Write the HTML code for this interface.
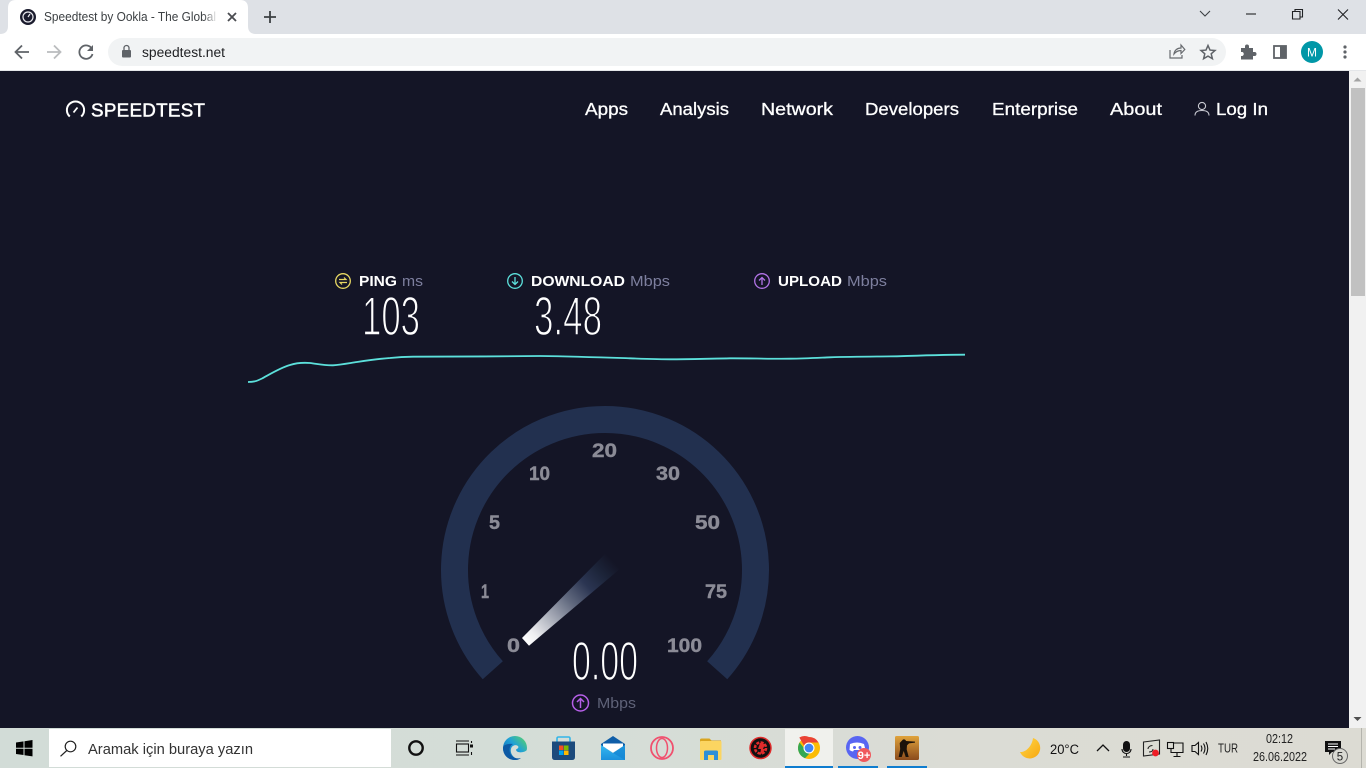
<!DOCTYPE html>
<html><head><meta charset="utf-8"><title>Speedtest by Ookla</title>
<style>html,body{margin:0;padding:0;width:1366px;height:768px;overflow:hidden;background:#141526}svg{display:block}text{font-family:"Liberation Sans",sans-serif}</style></head>
<body>
<svg xmlns="http://www.w3.org/2000/svg" width="1366" height="768" viewBox="0 0 1366 768">
<defs>
<linearGradient id="tb" x1="0" x2="1" y1="0" y2="0"><stop offset="0" stop-color="#d2dcd7"/><stop offset=".45" stop-color="#d5ddd7"/><stop offset=".7" stop-color="#dbdcd5"/><stop offset="1" stop-color="#dcdbd3"/></linearGradient>
<linearGradient id="fade" x1="0" x2="1" y1="0" y2="0"><stop offset="0" stop-color="#fff" stop-opacity="0"/><stop offset="1" stop-color="#fff"/></linearGradient>
<linearGradient id="needle" gradientUnits="userSpaceOnUse" x1="525" y1="642" x2="613" y2="561"><stop offset="0" stop-color="#fff"/><stop offset=".1" stop-color="#eeeef1"/><stop offset=".5" stop-color="#636b80"/><stop offset=".7" stop-color="#2b3552"/><stop offset=".86" stop-color="#1c2439"/><stop offset="1" stop-color="#141526"/></linearGradient>
<linearGradient id="edge" x1="0" x2="1" y1="1" y2="0"><stop offset="0" stop-color="#0c59a4"/><stop offset=".55" stop-color="#1fa0d8"/><stop offset="1" stop-color="#5fd85f"/></linearGradient>
<linearGradient id="mail" x1="0" x2="0" y1="0" y2="1"><stop offset="0" stop-color="#35b8f0"/><stop offset="1" stop-color="#1b90dc"/></linearGradient>
<linearGradient id="cs" x1="0" x2="0" y1="0" y2="1"><stop offset="0" stop-color="#e0a33c"/><stop offset="1" stop-color="#8a4a1c"/></linearGradient>
<linearGradient id="moon" x1="0" x2="1" y1="0" y2="1"><stop offset="0" stop-color="#ffd84a"/><stop offset="1" stop-color="#f7a70f"/></linearGradient>
</defs>

<!-- browser chrome -->
<rect width="1366" height="34" fill="#dee1e6"/>
<rect y="34" width="1366" height="36" fill="#fff"/>
<rect y="70" width="1366" height="1" fill="#e4e6e9"/>
<path d="M0 34q8 0 8-8V8q0-8 8-8h224q8 0 8 8v18q0 8 8 8z" fill="#fff"/>
<circle cx="28" cy="17" r="8" fill="#1b1c2e"/><circle cx="28" cy="17" r="5" fill="none" stroke="#e9e9ee" stroke-width="1.2"/><path d="M28 17l2-3" stroke="#e9e9ee" stroke-width="1.2"/>
<text x="44" y="21" font-size="12.5" fill="#3c4043" textLength="172" lengthAdjust="spacingAndGlyphs">Speedtest by Ookla - The Global</text>
<rect x="203" y="6" width="15" height="22" fill="url(#fade)"/><rect x="218" y="6" width="26" height="22" fill="#fff"/>
<path d="M228 13l8 8M236 13l-8 8" stroke="#4a4c50" stroke-width="1.8"/>
<path d="M264 17h12M270 11v12" stroke="#3c4043" stroke-width="1.8"/>
<path d="M29 52H16M22 45.5L15.5 52l6.500 6.500" fill="none" stroke="#5f6368" stroke-width="1.8"/>
<path d="M47 52h13M54 45.500l6.500 6.500-6.500 6.500" fill="none" stroke="#babcbe" stroke-width="1.800"/>
<path d="M92 49a6.700 6.700 0 1 0 .5 5" fill="none" stroke="#5f6368" stroke-width="1.800"/><path d="M93 45v6h-6z" fill="#5f6368"/>
<rect x="108" y="38" width="1118" height="28" rx="14" fill="#f1f3f4"/>
<rect x="122" y="50" width="9" height="7.500" rx="1" fill="#5f6368"/><path d="M124 50v-2a2.500 2.500 0 0 1 5 0v2" fill="none" stroke="#5f6368" stroke-width="1.300"/>
<text x="142" y="57" font-size="13.500" fill="#202124" textLength="83" lengthAdjust="spacingAndGlyphs">speedtest.net</text>
<path d="M1170 50v8h12v-3" fill="none" stroke="#686b6f" stroke-width="1.200"/><path d="M1174 54c.5-4 3.500-6 7-6v-3l3.800 4.500-3.800 4v-3c-3 0-5 1-7 3.500z" fill="none" stroke="#686b6f" stroke-width="1.200"/>
<path d="M1208 45.500l2 4.600 5 .4-3.800 3.300 1.200 4.900-4.400-2.600-4.400 2.600 1.200-4.900-3.800-3.300 5-.4z" fill="none" stroke="#5f6368" stroke-width="1.500"/>
<path d="M1241 48h4v-1.500a2 2 0 0 1 4 0V48h4v4h1.500a2 2 0 0 1 0 4H1253v3.500h-12V56h1.500a2.200 2.200 0 0 0 0-4H1241z" fill="#5f6368"/>
<rect x="1274" y="46" width="12" height="12" fill="none" stroke="#5f6368" stroke-width="1.800"/><rect x="1280" y="46" width="6" height="12" fill="#5f6368"/>
<circle cx="1312" cy="52" r="11" fill="#0097a7"/><text x="1312" y="56.500" font-size="12" fill="#fff" text-anchor="middle">M</text>
<g fill="#5f6368"><circle cx="1345" cy="47" r="1.600"/><circle cx="1345" cy="52" r="1.600"/><circle cx="1345" cy="57" r="1.600"/></g>
<path d="M1200 11l5 5 5-5" fill="none" stroke="#3c4043" stroke-width="1.100"/>
<path d="M1246 14h10" stroke="#202124" stroke-width="1.100"/>
<path d="M1292.500 11.500h7.500v7.500h-7.500zM1295 11.500V9.500h7.500V17H1300" fill="none" stroke="#202124" stroke-width="1.100"/>
<path d="M1338 9.500l10 10M1348 9.500l-10 10" stroke="#202124" stroke-width="1.100"/>

<!-- page -->
<rect y="71" width="1349" height="657" fill="#141526"/>
<rect x="1349" y="71" width="17" height="657" fill="#f1f1f1"/>
<rect x="1351" y="88" width="14" height="208" fill="#c1c1c1"/>
<path d="M1357.500 77.500l4 4h-8z" fill="#a3a3a3"/><path d="M1353.500 717h8l-4 4z" fill="#505050"/>

<!-- logo -->
<path d="M69.800 116.500a8.600 8.600 0 1 1 11.400 0" fill="none" stroke="#fff" stroke-width="2"/><path d="M73.500 112.500l4-5" stroke="#fff" stroke-width="1.800"/>
<text x="91" y="116.500" font-size="18.800" fill="#fff" stroke="#fff" stroke-width=".5" textLength="114" lengthAdjust="spacing">SPEEDTEST</text>

<!-- nav -->
<g font-size="17.500" fill="#fff" stroke="#fff" stroke-width=".3">
<text x="585" y="115" textLength="43" lengthAdjust="spacingAndGlyphs">Apps</text>
<text x="660" y="115" textLength="69" lengthAdjust="spacingAndGlyphs">Analysis</text>
<text x="761" y="115" textLength="72" lengthAdjust="spacingAndGlyphs">Network</text>
<text x="865" y="115" textLength="94" lengthAdjust="spacingAndGlyphs">Developers</text>
<text x="992" y="115" textLength="86" lengthAdjust="spacingAndGlyphs">Enterprise</text>
<text x="1110" y="115" textLength="52" lengthAdjust="spacingAndGlyphs">About</text>
<text x="1216" y="115" textLength="52" lengthAdjust="spacingAndGlyphs">Log In</text>
</g>
<circle cx="1202" cy="106" r="3.600" fill="none" stroke="#c9cad2" stroke-width="1.100"/><path d="M1195 115.500c0-3.500 3-5 7-5s7 1.500 7 5" fill="none" stroke="#c9cad2" stroke-width="1.100"/>

<!-- result labels -->
<circle cx="343" cy="281" r="7.300" fill="none" stroke="#e8d863" stroke-width="1.300"/><path d="M339 279.500h7l-2-2M347 282.500h-7l2 2" fill="none" stroke="#e8d863" stroke-width="1.200"/>
<text x="359" y="286" font-size="14.500" font-weight="bold" fill="#fff" textLength="38" lengthAdjust="spacingAndGlyphs">PING</text>
<text x="402" y="286" font-size="14.500" fill="#7d7f9e" textLength="21" lengthAdjust="spacingAndGlyphs">ms</text>
<circle cx="515" cy="281" r="7.300" fill="none" stroke="#5ce0db" stroke-width="1.300"/><path d="M515 277v7M512 281.500l3 3 3-3" fill="none" stroke="#5ce0db" stroke-width="1.300"/>
<text x="531" y="286" font-size="14.500" font-weight="bold" fill="#fff" textLength="94" lengthAdjust="spacingAndGlyphs">DOWNLOAD</text>
<text x="630" y="286" font-size="14.500" fill="#7d7f9e" textLength="40" lengthAdjust="spacingAndGlyphs">Mbps</text>
<circle cx="762" cy="281" r="7.300" fill="none" stroke="#b273e6" stroke-width="1.300"/><path d="M762 285v-7M759 280.500l3-3 3 3" fill="none" stroke="#b273e6" stroke-width="1.300"/>
<text x="778" y="286" font-size="14.500" font-weight="bold" fill="#fff" textLength="64" lengthAdjust="spacingAndGlyphs">UPLOAD</text>
<text x="847" y="286" font-size="14.500" fill="#7d7f9e" textLength="40" lengthAdjust="spacingAndGlyphs">Mbps</text>

<!-- big numbers -->
<g fill="#fff" stroke="#141526" stroke-width="1.500" paint-order="fill" font-size="55">
<text x="362" y="335" textLength="58" lengthAdjust="spacingAndGlyphs">103</text>
<text x="534" y="335" textLength="68" lengthAdjust="spacingAndGlyphs">3.48</text>
<text x="572" y="680" textLength="66" lengthAdjust="spacingAndGlyphs">0.00</text>
</g>

<!-- graph -->
<path d="M248 382C254 382 257 381 262 378.500C272 373 281 367.500 290 365C297 362.700 303 362.500 310 363C318 364 325 365.500 333 365.300C342 364.500 350 363 357 362C370 360 380 358.700 390 358C400 357 406 356.800 413 356.700C450 356.500 500 356.500 540 356C575 356.500 605 357.500 630 358.300C650 359 660 359.300 673 359.300C695 359.200 712 358.600 730 358.300C750 358.200 770 359 790 358.700C805 358.500 818 357.800 830 357.300C855 356.500 875 356.600 897 356.300C920 355.500 945 354.800 965 354.700" fill="none" stroke="#5ce0db" stroke-width="1.800"/>

<!-- gauge -->
<path d="M492.800 670.300A150.500 150.500 0 1 1 717.200 670.300" fill="none" stroke="#22304f" stroke-width="27"/>
<path d="M522 638L529 645.700L620.700 568.300L605 554Z" fill="url(#needle)"/>
<g font-size="19" font-weight="bold" fill="#8b8b96" stroke="#8b8b96" stroke-width=".4">
<text x="592" y="457" textLength="25" lengthAdjust="spacingAndGlyphs">20</text>
<text x="529" y="480" textLength="21" lengthAdjust="spacingAndGlyphs">10</text>
<text x="656" y="480" textLength="24" lengthAdjust="spacingAndGlyphs">30</text>
<text x="489" y="529" textLength="11" lengthAdjust="spacingAndGlyphs">5</text>
<text x="695" y="529" textLength="25" lengthAdjust="spacingAndGlyphs">50</text>
<text x="481" y="598" textLength="8" lengthAdjust="spacingAndGlyphs">1</text>
<text x="705" y="598" textLength="22" lengthAdjust="spacingAndGlyphs">75</text>
<text x="507" y="652" textLength="13" lengthAdjust="spacingAndGlyphs">0</text>
<text x="667" y="652" textLength="35" lengthAdjust="spacingAndGlyphs">100</text>
</g>
<circle cx="580.500" cy="703" r="8" fill="none" stroke="#b65fe8" stroke-width="1.500"/><path d="M580.500 708v-9M577 702l3.500-3.500 3.500 3.500" fill="none" stroke="#b65fe8" stroke-width="1.500"/>
<text x="597" y="708" font-size="14.500" fill="#5f6278" textLength="39" lengthAdjust="spacingAndGlyphs">Mbps</text>

<!-- taskbar -->
<rect y="728" width="1366" height="40" fill="url(#tb)"/>
<g fill="#000"><path d="M16 742.500l7.500-1.100v6.300H16zM24.500 741.200l8-1.200v7.700h-8zM16 748.700h7.500v6.300L16 754zM24.500 748.700h8v7.700l-8-1.200z"/></g>
<rect x="49" y="729" width="342" height="38" fill="#fff"/>
<circle cx="70.500" cy="746.500" r="5.300" fill="none" stroke="#222" stroke-width="1.200"/><path d="M66.800 750.500l-6.300 5.800" stroke="#222" stroke-width="1.200"/>
<text x="88" y="754" font-size="14.500" fill="#333" textLength="165" lengthAdjust="spacingAndGlyphs">Aramak için buraya yazın</text>
<circle cx="416" cy="748" r="6.700" fill="none" stroke="#111" stroke-width="2.400"/>
<g fill="none" stroke="#111" stroke-width="1.100"><path d="M456 741h13M456 755h13"/><rect x="456.500" y="744" width="12" height="8"/><path d="M471.500 741v2M471.500 752v3"/></g><rect x="470" y="744.500" width="3" height="3" fill="#111"/>
<!-- edge -->
<circle cx="515" cy="748" r="12" fill="url(#edge)"/>
<path d="M527 749.500c-1 2-4 3-7.500 2.800-2-.2-3.500-1.300-3.500-2.800 1-.5 2-1 2.500-2.500-1-2.500-5-2.500-7 .5-2 3.500 0 10 7 12 3.500 0 7-1.500 8.500-10z" fill="#d5ddd7"/>
<path d="M503 748c0 7 5 12 12 12 2.500 0 4.500-.8 6-2-6 1.500-11.500-2-11.500-8 0-3 1.500-5 3.500-6-5-.5-10 .5-10 4z" fill="#0c59a4"/>
<!-- store -->
<path d="M557 742v-3.500q0-1.500 1.500-1.500h10q1.500 0 1.500 1.500v3.500" fill="none" stroke="#33b5e8" stroke-width="1.600"/><path d="M552 741.500h23v15.500q0 3-3 3h-17q-3 0-3-3z" fill="#1c4a7c"/><rect x="559" y="745.500" width="4.500" height="4.500" fill="#f25022"/><rect x="564" y="745.500" width="4.500" height="4.500" fill="#7fba00"/><rect x="559" y="750.500" width="4.500" height="4.500" fill="#00a4ef"/><rect x="564" y="750.500" width="4.500" height="4.500" fill="#ffb900"/>
<!-- mail -->
<path d="M601 744l12-8 12 8v4h-24z" fill="#0f5ea8"/><path d="M603 743.500h20v3l-10 6-10-6z" fill="#fff"/><path d="M601 745l12 8 12-8v15h-24z" fill="url(#mail)"/><path d="M613 753l12 7v-15z" fill="#1283d2" opacity=".7"/>
<!-- opera -->
<circle cx="662" cy="748" r="11" fill="none" stroke="#f0506e" stroke-width="1.800"/><ellipse cx="662" cy="748" rx="5.500" ry="9.500" fill="none" stroke="#f0506e" stroke-width="1.500"/>
<!-- folder -->
<path d="M700 740q0-1.500 1.500-1.500h8l2 2h9.500v6h-21z" fill="#d9a520"/><rect x="700" y="741" width="21.500" height="19" rx="1" fill="#fbd561"/><path d="M704 760v-8q0-1.500 1.500-1.500h11q1.500 0 1.500 1.500v8h-4v-5h-6v5z" fill="#2f8fd6"/>
<!-- driver booster -->
<circle cx="760.500" cy="748" r="10.500" fill="#111" stroke="#e02b2b" stroke-width="1.500"/><circle cx="760.500" cy="748" r="5.500" fill="none" stroke="#e02b2b" stroke-width="2.600" stroke-dasharray="3 1.300"/><path d="M760 743l5 1-2 5h3l-6 6 1-6h-3z" fill="#e02b2b"/>
<!-- chrome -->
<rect x="785" y="729" width="48" height="39" fill="#f0f1ed"/><rect x="785" y="766" width="48" height="2" fill="#0f7dcf"/>
<circle cx="809" cy="748" r="11" fill="#fbbc05"/><path d="M809 737a11 11 0 0 1 9.500 5.500H809a5.500 5.500 0 0 0-5 3l-4.700-8A11 11 0 0 1 809 737z" fill="#ea4335"/><path d="M799.500 742.500A11 11 0 0 0 805 758.300l4.700-5a5.500 5.500 0 0 1-5.700-5.300z" fill="#34a853"/><circle cx="809" cy="748" r="5.500" fill="#fff"/><circle cx="809" cy="748" r="4.400" fill="#4285f4"/>
<!-- discord -->
<circle cx="857.500" cy="747.500" r="11.500" fill="#5865f2"/><path d="M850 744q7-3 14 0l1.500 6q-2 1.500-3.500 1.500l-1-1.500h-7l-1 1.500q-1.500 0-3.500-1.500z" fill="#fff"/><circle cx="854.500" cy="747.500" r="1.500" fill="#5865f2"/><circle cx="860" cy="747.500" r="1.500" fill="#5865f2"/>
<circle cx="864" cy="755" r="7" fill="#f0585c"/><text x="864" y="759" font-size="11" font-weight="bold" fill="#fff" text-anchor="middle">9+</text>
<rect x="838" y="766" width="40" height="2" fill="#0f7dcf"/>
<!-- csgo -->
<rect x="895" y="736" width="24" height="24" rx="1.500" fill="url(#cs)"/><path d="M903 739.500a2.200 2.200 0 0 1 3 1.500l9 .6v1l-6 .8-2 2-.3 4 2 7.600h-3l-2-6-2 6h-3l1.500-8-.5-6z" fill="#1b120a"/>
<rect x="887" y="766" width="40" height="2" fill="#0f7dcf"/>
<!-- moon -->
<path d="M1033 738A10.500 10.500 0 1 1 1020 752C1026 752.500 1032 746 1033 738z" fill="url(#moon)"/>
<text x="1050" y="754" font-size="13.500" fill="#111" textLength="29" lengthAdjust="spacingAndGlyphs">20°C</text>
<path d="M1097 751l6-6 6 6" fill="none" stroke="#111" stroke-width="1.300"/>
<rect x="1123" y="741" width="7" height="11" rx="3.500" fill="#111"/><path d="M1122 749c0 6 9 6 9 0M1126.500 753v3M1123 757h7" fill="none" stroke="#111" stroke-width="1.100"/>
<path d="M1143.500 742l16-2v14l-16 2z" fill="none" stroke="#222" stroke-width="1.100"/><path d="M1148 749c0-2 2-3.500 4.500-3.500M1153 749c0 2-2 3-4 3" fill="none" stroke="#222" stroke-width="1.100"/><circle cx="1155.500" cy="753" r="3.400" fill="#ee1c25"/>
<g fill="none" stroke="#111" stroke-width="1.100"><rect x="1167.500" y="742.500" width="6" height="6"/><path d="M1173.500 743h9.500v9.500h-12v-4M1177 752.500v3.500M1173.500 756.500h7"/></g>
<g fill="none" stroke="#111" stroke-width="1.100"><path d="M1192 745.500h3l3.500-3v12l-3.500-3h-3z"/><path d="M1201 745.500q1.800 3 0 6M1203.500 743.500q3 5 0 10M1206 742q3.500 6.500 0 13"/></g>
<text x="1218" y="752.500" font-size="13" fill="#222" textLength="20" lengthAdjust="spacingAndGlyphs">TUR</text>
<text x="1266" y="743" font-size="12.500" fill="#222" textLength="27" lengthAdjust="spacingAndGlyphs">02:12</text>
<text x="1253" y="761" font-size="12.500" fill="#222" textLength="54" lengthAdjust="spacingAndGlyphs">26.06.2022</text>
<path d="M1325 741h16v11h-9l-3 3v-3h-4z" fill="#111"/><path d="M1328 744h10M1328 746.500h10M1328 749h7" stroke="#fff" stroke-width="1"/>
<circle cx="1340" cy="756" r="7.500" fill="#d9d9d2" stroke="#666" stroke-width="1"/><text x="1340" y="760.500" font-size="11.500" fill="#222" text-anchor="middle">5</text>
<rect x="1361" y="728" width="1" height="40" fill="#b4b4ad"/>
</svg>
</body></html>
